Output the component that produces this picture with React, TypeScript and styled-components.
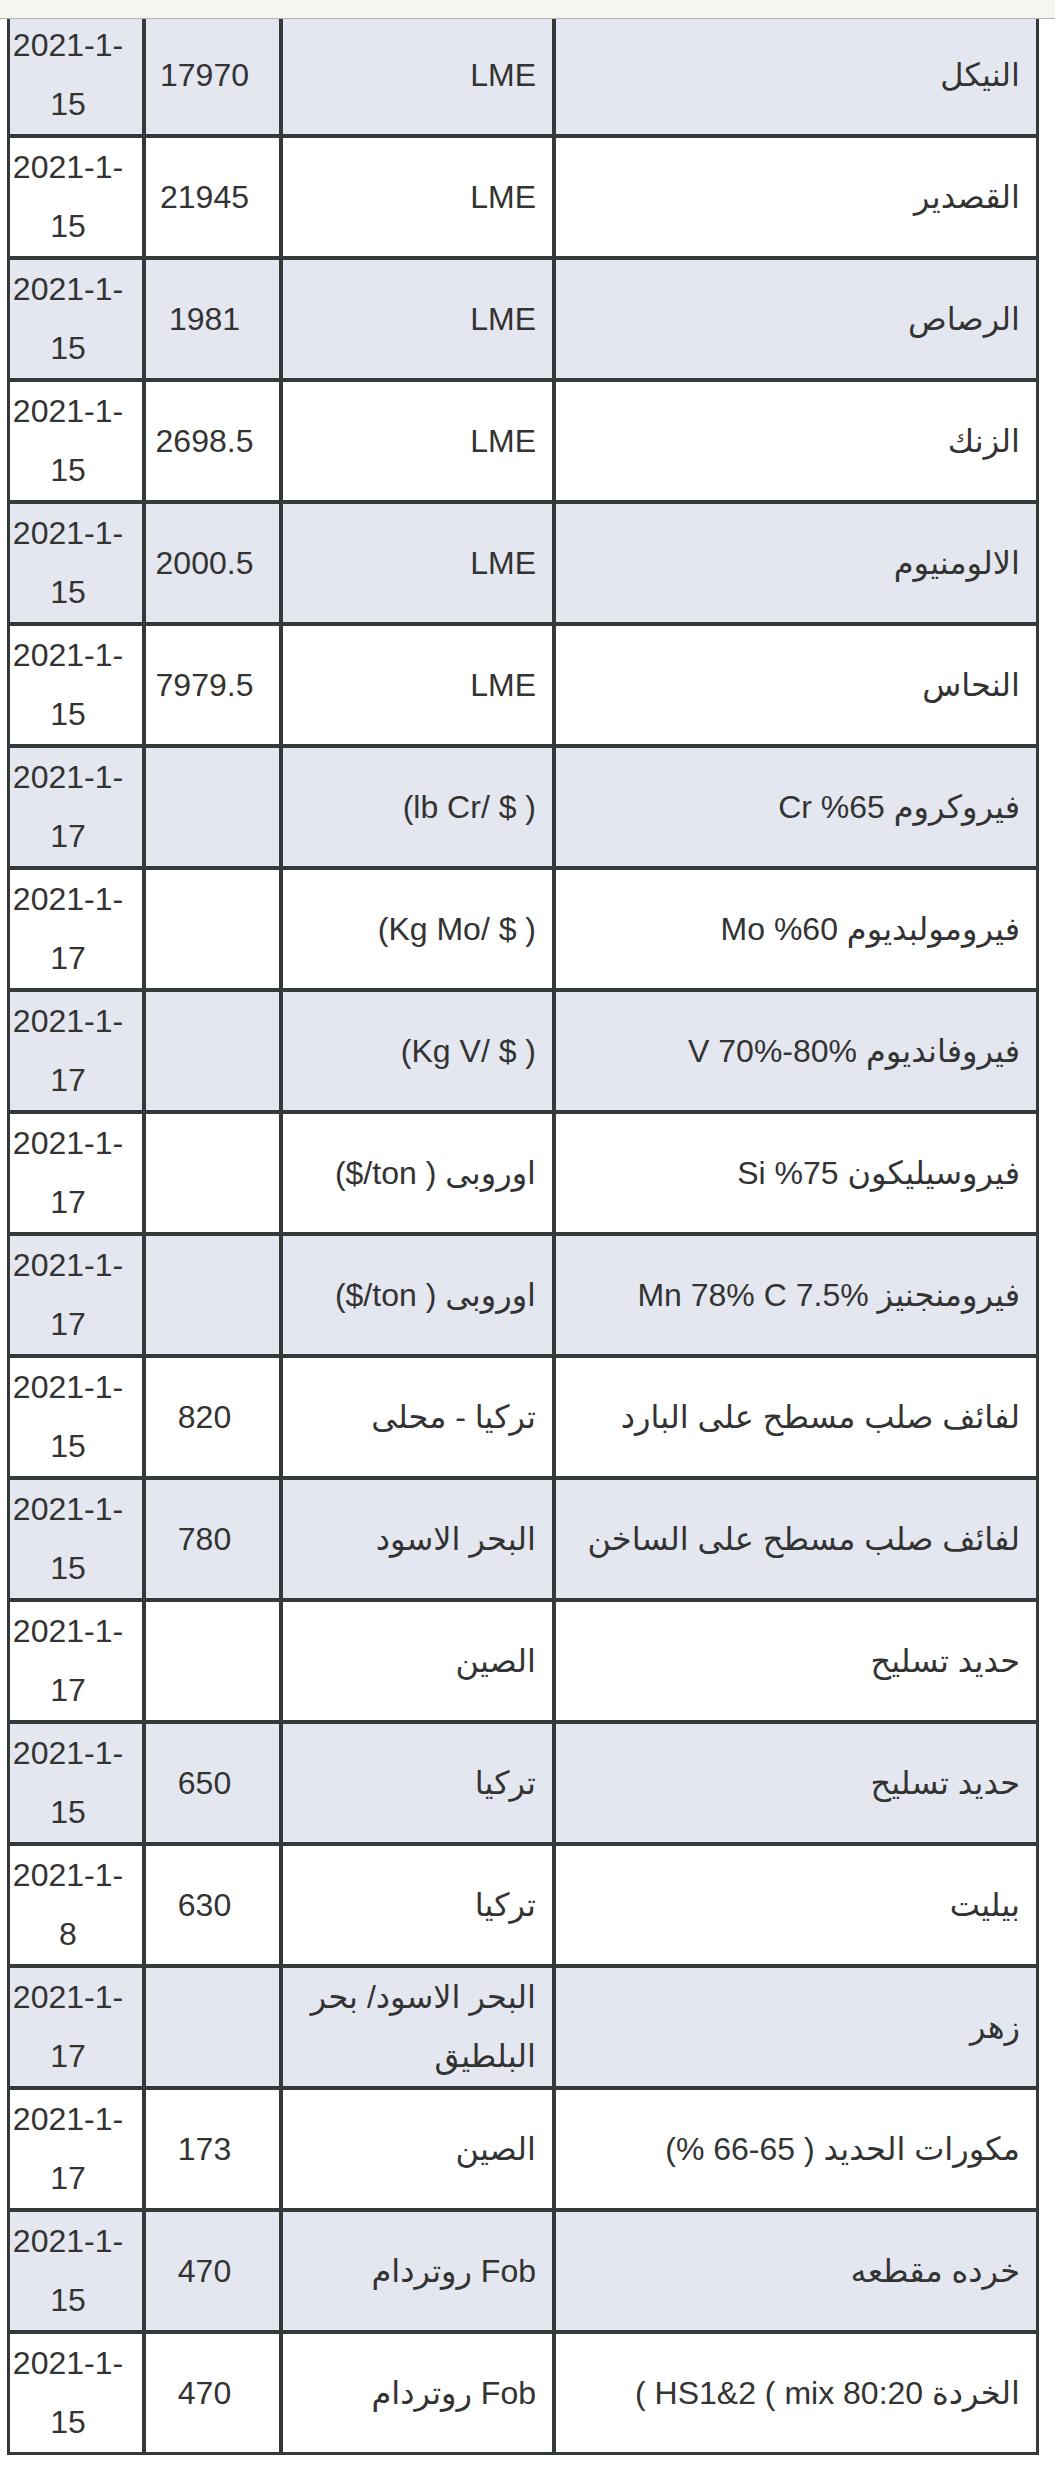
import React from 'react';
import styled, { createGlobalStyle } from 'styled-components';

interface PriceRow {
  name: string;
  source: string;
  price: string;
  date: string;
}

// the middle bracket of the last row is isolated so that the closing one is
// left unpaired and sits on the far left, as the source page shows it
const rows: PriceRow[] = [
  { name: 'النيكل', source: 'LME', price: '17970', date: '2021-1-15' },
  { name: 'القصدير', source: 'LME', price: '21945', date: '2021-1-15' },
  { name: 'الرصاص', source: 'LME', price: '1981', date: '2021-1-15' },
  { name: 'الزنك', source: 'LME', price: '2698.5', date: '2021-1-15' },
  { name: 'الالومنيوم', source: 'LME', price: '2000.5', date: '2021-1-15' },
  { name: 'النحاس', source: 'LME', price: '7979.5', date: '2021-1-15' },
  { name: 'فيروكروم 65% Cr', source: '( $ /lb Cr)', price: '', date: '2021-1-17' },
  { name: 'فيرومولبديوم 60% Mo', source: '( $ /Kg Mo)', price: '', date: '2021-1-17' },
  { name: 'فيروفانديوم V 70%-80%', source: '( $ /Kg V)', price: '', date: '2021-1-17' },
  { name: 'فيروسيليكون 75% Si', source: 'اوروبى ( ton/$)', price: '', date: '2021-1-17' },
  { name: 'فيرومنجنيز Mn 78% C 7.5%', source: 'اوروبى ( ton/$)', price: '', date: '2021-1-17' },
  { name: 'لفائف صلب مسطح على البارد', source: 'تركيا - محلى', price: '820', date: '2021-1-15' },
  { name: 'لفائف صلب مسطح على الساخن', source: 'البحر الاسود', price: '780', date: '2021-1-15' },
  { name: 'حديد تسليح', source: 'الصين', price: '', date: '2021-1-17' },
  { name: 'حديد تسليح', source: 'تركيا', price: '650', date: '2021-1-15' },
  { name: 'بيليت', source: 'تركيا', price: '630', date: '2021-1-8' },
  { name: 'زهر', source: 'البحر الاسود/ بحر البلطيق', price: '', date: '2021-1-17' },
  { name: 'مكورات الحديد ( 65-66 %)', source: 'الصين', price: '173', date: '2021-1-17' },
  { name: 'خرده مقطعه', source: 'Fob روتردام', price: '470', date: '2021-1-15' },
  { name: 'الخردة HS1&2 \u2066(\u2069 mix 80:20 )', source: 'Fob روتردام', price: '470', date: '2021-1-15' },
];

const GlobalStyle = createGlobalStyle`
  html, body {
    margin: 0;
    padding: 0;
    background: #ffffff;
  }
  body {
    font-family: "Liberation Sans", "DejaVu Sans", Arial, sans-serif;
    color: #333333;
  }
`;

const TopBar = styled.div`
  position: fixed;
  top: 0;
  left: 0;
  right: 0;
  height: 18px;
  background: #f6f5f1;
  border-bottom: 1px solid #b4b4b2;
  z-index: 10;
`;

const Page = styled.div`
  padding: 13px 0 20px 7px;
`;

const Table = styled.table`
  direction: rtl;
  width: 1032px;
  table-layout: fixed;
  border-collapse: separate;
  border-spacing: 0;
  border: 1px solid #343a3a;
`;

const Row = styled.tr<{ $shaded: boolean }>`
  background: ${(p) => (p.$shaded ? '#e4e7ef' : '#ffffff')};
`;

const Cell = styled.td<{ $width: number; $center?: boolean }>`
  box-sizing: border-box;
  width: ${(p) => p.$width}px;
  border: 2px solid #343a3a;
  padding: 0 16px 0 0;
  font-size: 32px;
  line-height: 59px;
  height: 122px;
  vertical-align: middle;
  text-align: ${(p) => (p.$center ? 'center' : 'right')};
  color: #333333;
  word-wrap: break-word;
`;

export default function App() {
  return (
    <>
      <GlobalStyle />
      <TopBar />
      <Page>
        <Table>
          <tbody>
            {rows.map((r, i) => (
              <Row key={i} $shaded={i % 2 === 0}>
                <Cell $width={484}>{r.name}</Cell>
                <Cell $width={273}>{r.source}</Cell>
                <Cell $width={137} $center>
                  {r.price}
                </Cell>
                <Cell $width={136} $center>
                  {r.date}
                </Cell>
              </Row>
            ))}
          </tbody>
        </Table>
      </Page>
    </>
  );
}
